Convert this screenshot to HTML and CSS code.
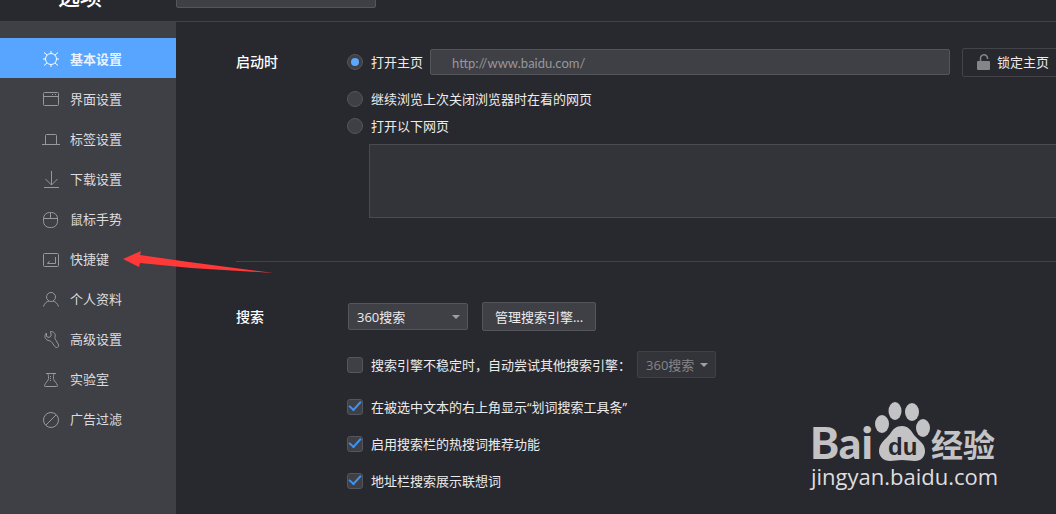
FILE: index.html
```html
<!DOCTYPE html>
<html lang="zh-CN">
<head>
  <meta charset="UTF-8" />
  <meta name="viewport" content="width=device-width, initial-scale=1.0"/>
  <title>选项</title>
  <link rel="stylesheet" href="styles.css">
</head>
<body>
  <header>
    <h1>选项</h1>
    <input type="text" class="search-input" aria-label="搜索选项" />
  </header>

  <div class="layout">
    <nav>
      <a href="#" class="active">
        <svg viewBox="0 0 18 18"><circle cx="9" cy="9" r="5.5"/><path d="M9 1v2.500M9 14.500V17M1 9h2.500M14.500 9H17M2 2.500l3 2.500M16 2.500l-3 2.500M2 15.500l3-2.500M16 15.500l-3-2.500"/></svg>
        基本设置
      </a>
      <a href="#">
        <svg viewBox="0 0 18 18"><rect x="1.500" y="2.500" width="15" height="13" rx="1"/><path d="M1.500 6.500h15M10 4.500h1M13 4.500h1"/></svg>
        界面设置
      </a>
      <a href="#">
        <svg viewBox="0 0 18 18"><path d="M0 14.500h18M3.500 14.500v-9q0-1 1-1h9q1 0 1 1v9"/></svg>
        标签设置
      </a>
      <a href="#">
        <svg viewBox="0 0 18 18"><path d="M9.500 1v14M3.500 9l6 6 6-6M2 17.500h15"/></svg>
        下载设置
      </a>
      <a href="#">
        <svg viewBox="0 0 18 18"><rect x="1.500" y="2.500" width="14" height="15" rx="6"/><path d="M1.500 8.500h14M8.500 2.500v6"/></svg>
        鼠标手势
      </a>
      <a href="#">
        <svg viewBox="0 0 18 18"><rect x="1.500" y="3.500" width="15" height="13" rx="1"/><path d="M13.500 7v6.500h-8M7.500 11l-2 2.500"/></svg>
        快捷键
      </a>
      <a href="#">
        <svg viewBox="0 0 18 18"><circle cx="9" cy="7" r="4.500"/><path d="M1.500 16.500c1-3 3-5 5.500-5.500M16.500 16.500c-1-3-3-5-5.500-5.500"/></svg>
        个人资料
      </a>
      <a href="#">
        <svg viewBox="0 0 18 18"><path d="M8.500 1.500c3.500 0 5.500 2.500 4.500 5.500-.3 1 0 2 .8 3l2.400 4c1.500 2.800-1.700 4.800-3.400 2.500L10 12.500c-.7-1-1.500-1.500-2.500-1.700C3 10 1.500 6 4.500 3v3.500l2.500 1L9 6V4z"/></svg>
        高级设置
      </a>
      <a href="#">
        <svg viewBox="0 0 18 18"><path d="M4 3.500h10M5.500 3.500c1 1 1 2 1 5 0 2-2 3-3 5l-1 2q-.5 1 1 1h11q1.500 0 1-1l-1-2c-1-2-3-3-3-5 0-3 0-4 1-5"/><path d="M8.500 6v6" stroke-dasharray="1 1"/></svg>
        实验室
      </a>
      <a href="#">
        <svg viewBox="0 0 18 18"><circle cx="9" cy="10" r="7.500"/><path d="M4 15L14 5"/></svg>
        广告过滤
      </a>
    </nav>

    <main>
      <section class="startup">
        <h2>启动时</h2>
        <div class="options">
          <div class="row home-row">
            <input type="radio" name="startup" id="openHome" checked />
            <label for="openHome">打开主页</label>
            <input type="text" class="home-url" value="http://www.baidu.com/" aria-label="主页地址" />
            <button class="lock-btn">
              <svg viewBox="0 0 14 16"><path d="M3.500 7V4.500a3.500 3.500 0 0 1 7-.5v1" fill="none" stroke="#858587" stroke-width="1.500"/><rect x="0" y="7" width="13" height="9" rx="1" fill="#858587"/></svg>
              锁定主页
            </button>
          </div>
          <div class="row">
            <input type="radio" name="startup" id="openLast" />
            <label for="openLast">继续浏览上次关闭浏览器时在看的网页</label>
          </div>
          <div class="row">
            <input type="radio" name="startup" id="openPages" />
            <label for="openPages">打开以下网页</label>
          </div>
          <textarea class="page-list" aria-label="打开以下网页"></textarea>
        </div>
      </section>

      <section class="search">
        <h2>搜索</h2>
        <div class="options">
          <div class="row engine-row">
            <span class="select engine">
              <select aria-label="搜索引擎"><option>360搜索</option></select>
            </span>
            <button class="manage-btn">管理搜索引擎...</button>
          </div>
          <div class="row fallback-row">
            <input type="checkbox" id="fallback" />
            <label for="fallback">搜索引擎不稳定时，自动尝试其他搜索引擎：</label>
            <span class="select fallback">
              <select aria-label="备用搜索引擎" disabled><option>360搜索</option></select>
            </span>
          </div>
          <div class="row check-row">
            <input type="checkbox" id="wordBar" checked />
            <label for="wordBar">在被选中文本的右上角显示“划词搜索工具条”</label>
          </div>
          <div class="row check-row">
            <input type="checkbox" id="hotWords" checked />
            <label for="hotWords">启用搜索栏的热搜词推荐功能</label>
          </div>
          <div class="row check-row">
            <input type="checkbox" id="suggest" checked />
            <label for="suggest">地址栏搜索展示联想词</label>
          </div>
        </div>
      </section>
    </main>
  </div>

  <svg class="arrow" viewBox="0 0 152 24"><path d="M0 9L18 1l-1 4 49 7 85 11-83-5-51-5-1 4z" fill="#ff3838"/></svg>

  <svg class="watermark" viewBox="0 0 192 96">
    <g fill="#c3c3c5">
      <text x="1" y="58" class="bai">Bai</text>
      <ellipse cx="73" cy="23" rx="7" ry="9"/>
      <ellipse cx="86" cy="10" rx="6.500" ry="9"/>
      <ellipse cx="103" cy="11" rx="7" ry="9"/>
      <ellipse cx="114" cy="27" rx="7" ry="9"/>
      <path d="M93 25c6 0 9 4 12 9 4 5 11 8 11 16 0 6-4 10-10 10-5 0-8-1-13-1s-8 1-12 1c-6 0-11-4-11-10 0-8 7-12 11-17 3-5 6-8 12-8z"/>
      <text x="122" y="56" class="jingyan">经验</text>
    </g>
    <text x="79" y="54" class="du">du</text>
    <text x="2" y="84" class="site">jingyan.baidu.com</text>
  </svg>
</body>
</html>
```
FILE: styles.css
```css
* { box-sizing: border-box; }
body { margin: 0; height: 100vh; overflow: hidden; display: flex; flex-direction: column; background: #28282f; color: #ececec; font: 13px/20px "Open Sans", "Noto Sans CJK SC", sans-serif; }
h1, h2 { margin: 0; color: #fff; }
input, textarea, select, button { margin: 0; font: inherit; color: inherit; border: 1px solid #55555b; border-radius: 2px; background: #3f3f46; }

header { flex: none; height: 22px; display: flex; align-items: flex-end; padding-bottom: 13px; border-bottom: 1px solid #434348; }
header h1 { width: 176px; padding-left: 58px; font-size: 22px; line-height: 24px; font-weight: 500; }
.search-input { width: 200px; height: 28px; flex: none; }

.layout { flex: 1; display: flex; min-height: 0; }
nav { flex: none; width: 176px; padding-top: 16px; background: #3f3f46; }
nav a { display: flex; align-items: center; gap: 10px; height: 40px; padding: 2px 0 0 42px; color: #dcdcde; text-decoration: none; }
nav a.active { background: #57a5ff; color: #e8f2ff; font-weight: bold; }
nav svg { width: 18px; height: 18px; fill: none; stroke: #98989b; overflow: visible; }
nav a.active svg { stroke: #fff; }

main { flex: 1; min-width: 0; padding: 26px 0 0 60px; }
section { display: flex; }
section h2 { flex: none; width: 111px; font-size: 14px; line-height: 28px; font-weight: 500; }
.options { flex: 1; min-width: 0; }
.row { display: flex; align-items: center; white-space: nowrap; }
.row label { margin-left: 8px; }
.startup .row { height: 27px; }
.startup .home-row { height: 28px; margin-bottom: 9px; }
.startup { padding-bottom: 43px; border-bottom: 1px solid #434348; }
.search { padding-top: 40px; }
.search h2 { line-height: 30px; }

input[type="radio"], input[type="checkbox"] { appearance: none; flex: none; width: 16px; height: 16px; display: grid; place-items: center; }
input[type="radio"] { border-radius: 50%; }
input[type="checkbox"] { border-radius: 3px; }
input[type="radio"]:checked::after { content: ""; width: 8px; height: 8px; border-radius: 50%; background: #5ca8ff; }
input[type="checkbox"]:checked::after { content: ""; width: 10px; height: 5px; margin-bottom: 4px; border: solid #3d94f6; border-width: 0 0 2px 2px; transform: rotate(-48deg); }

.home-url { flex: none; width: 520px; height: 26px; margin: 0 12px 0 7px; padding: 2px 21px 0; color: #98989b; font-family: Lato, sans-serif; }
.lock-btn { flex: none; width: 110px; height: 29px; display: flex; align-items: center; gap: 6px; padding: 0 14px; background: none; border-color: #434348; }
.lock-btn svg { width: 14px; height: 16px; }
.page-list { display: block; width: 100%; height: 74px; margin: 5px 0 0 22px; border-color: #4a4a50; border-radius: 0; background: #33333a; resize: none; }

.select { position: relative; display: inline-flex; height: 27px; }
.select select { appearance: none; width: 100%; padding: 0 8px; }
.select::after { content: ""; position: absolute; right: 8px; top: 12px; border: 4px solid transparent; border-top-color: #a0a0a3; border-bottom: 0; pointer-events: none; }
.engine { width: 120px; margin-left: 1px; }
.fallback { width: 79px; margin-left: 6px; }
.fallback select { background: #33333a; border-color: #404046; color: #858587; opacity: 1; }
.manage-btn { width: 114px; height: 29px; margin-left: 14px; padding: 0; }
.engine-row { height: 29px; }
.fallback-row { height: 27px; margin: 20px 0 10px; }
.check-row { height: 37px; }

.arrow { position: absolute; left: 123px; top: 250px; width: 152px; height: 24px; }
.watermark { position: absolute; right: 55px; bottom: 17px; width: 192px; height: 96px; }
.bai { font: 900 44px Lato, sans-serif; }
.du { font: bold 24px "Liberation Sans", sans-serif; fill: #28282f; }
.jingyan { font: bold 32px "Noto Sans CJK SC", sans-serif; }
.site { font: 22px "Open Sans", sans-serif; fill: #dededf; }
```
